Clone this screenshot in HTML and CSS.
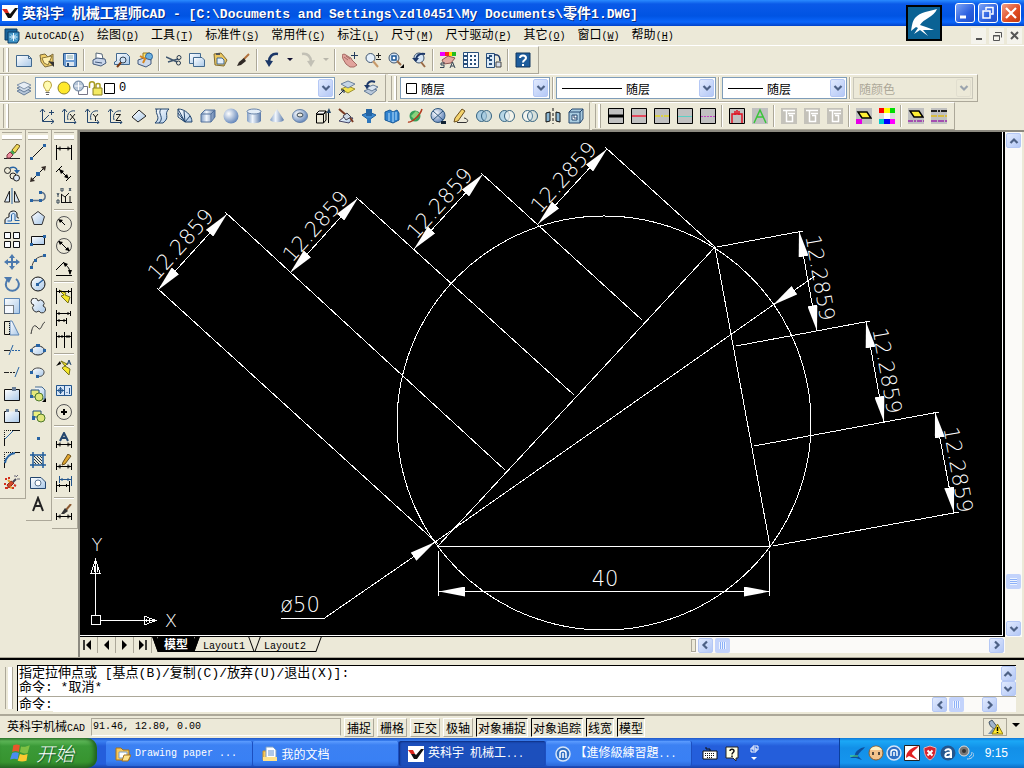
FILE: index.html
```html
<!DOCTYPE html>
<html lang="zh-CN">
<head>
  <meta charset="UTF-8">
  <meta name="viewport" content="width=device-width, initial-scale=1.0">
  <title>英科宇 机械工程师CAD</title>
  <link rel="stylesheet" href="styles.css">
</head>
<body>
  <!-- Shared gradients, arrow heads and repeated glyphs -->
  <svg class="defs" aria-hidden="true">
    <defs>
      <linearGradient id="sheet" x1="0" y1="0" x2="1" y2="1"><stop offset="0" stop-color="#fff"/><stop offset="1" stop-color="#a9c8e8"/></linearGradient>
      <linearGradient id="metal"><stop offset="0" stop-color="#7f9cc4"/><stop offset=".4" stop-color="#f2f7fd"/><stop offset="1" stop-color="#5878a8"/></linearGradient>
      <radialGradient id="ball" cx=".35" cy=".35" r=".7"><stop offset="0" stop-color="#fff"/><stop offset="1" stop-color="#5f83b8"/></radialGradient>
      <marker id="arrow" viewBox="0 0 26 10" refX="26" refY="5" markerWidth="26" markerHeight="10" markerUnits="userSpaceOnUse" orient="auto-start-reverse"><path d="M26 5L0 0V10Z" fill="#fff"/></marker>
      <symbol id="up" viewBox="0 0 10 10"><path d="M1.500 7L5 3.500L8.500 7" fill="none" stroke="#4d6185" stroke-width="2.200"/></symbol>
      <symbol id="down" viewBox="0 0 10 10"><path d="M1.500 3L5 6.500L8.500 3" fill="none" stroke="#4d6185" stroke-width="2.200"/></symbol>
      <symbol id="left" viewBox="0 0 10 10"><path d="M7 1.500L3.500 5L7 8.500" fill="none" stroke="#4d6185" stroke-width="2.200"/></symbol>
      <symbol id="right" viewBox="0 0 10 10"><path d="M3 1.500L6.500 5L3 8.500" fill="none" stroke="#4d6185" stroke-width="2.200"/></symbol>
      <symbol id="brand" viewBox="0 0 16 16"><path d="M0 0H16V16H0Z" fill="#fff"/><path d="M0 4H5L7 8H3Z" fill="#d8261c"/><path d="M3 8H7L8 9L13 3H16L9 13H6Z" fill="#111"/></symbol>
      <symbol id="dim" viewBox="0 0 16 16"><path d="M.5 9V16M15.500 9V16M1 12.500H15M4 10.500V14.500M3 11.500V13.500M12 10.500V14.500M13 11.500V13.500" fill="none" stroke="#000"/></symbol>
    </defs>
  </svg>

  <!-- Title bar -->
  <header class="title-bar">
    <svg class="icon"><use href="#brand"/></svg>
    <h1 class="title">英科宇<span class="en"> </span>机械工程师<span class="en">CAD - [C:\Documents and Settings\zdl0451\My Documents\</span>零件<span class="en">1.DWG]</span></h1>
    <div class="window-buttons">
      <button class="win-btn" aria-label="Minimize"><svg class="icon"><path d="M3 12H9" stroke="#fff" stroke-width="3"/></svg></button>
      <button class="win-btn" aria-label="Restore"><svg class="icon"><path d="M6 2.500H13V9H11M6 2V5M3 6H10V13H3Z" stroke="#fff" stroke-width="1.500"/></svg></button>
      <button class="win-btn close" aria-label="Close"><svg class="icon"><path d="M3 3L13 13M13 3L3 13" stroke="#fff" stroke-width="2.200"/></svg></button>
    </div>
    <svg class="swallow" viewBox="0 0 36 36"><path d="M1 1H35V35H1Z" fill="#0a6294" stroke="#000" stroke-width="2"/><path d="M31 4C24 6 14 7 9 13C6 17 6 21 5 26L10 22L12 23L8 29L14 25L22 31L17 25L28 25L20 22L14 20C17 14 28 12 31 4Z" fill="#fff"/></svg>
  </header>

  <!-- Menu -->
  <nav class="menu-bar">
    <svg class="icon"><path d="M1 1H13V12H1Z" fill="#17639b" stroke="#0c3c66"/><path d="M4 4H15V12L13 15H4Z" fill="#3f93c6" stroke="#0c3c66"/><path d="M9.500 5V13M5.500 9H13.500M7 6.500L12 11.500M12 6.500L7 11.500" stroke="#e9f7ff"/></svg>
    <button><span class="en">AutoCAD(<u>A</u>)</span></button>
    <button>绘图<span class="en">(<u>D</u>)</span></button>
    <button>工具<span class="en">(<u>T</u>)</span></button>
    <button>标准件<span class="en">(<u>S</u>)</span></button>
    <button>常用件<span class="en">(<u>C</u>)</span></button>
    <button>标注<span class="en">(<u>L</u>)</span></button>
    <button>尺寸<span class="en">(<u>M</u>)</span></button>
    <button>尺寸驱动<span class="en">(<u>P</u>)</span></button>
    <button>其它<span class="en">(<u>O</u>)</span></button>
    <button>窗口<span class="en">(<u>W</u>)</span></button>
    <button>帮助<span class="en">(<u>H</u>)</span></button>
    <div class="doc-buttons">
      <button aria-label="Minimize drawing"><svg class="icon"><path d="M5 11H11" stroke="#555" stroke-width="2"/></svg></button>
      <button aria-label="Restore drawing"><svg class="icon"><path d="M6 4.500H12.500V9.500M4.500 7.500H10.500V12.500H4.500ZM4 8H11" stroke="#555"/></svg></button>
      <button aria-label="Close drawing"><svg class="icon"><path d="M4 4L11 11M11 4L4 11" stroke="#555" stroke-width="2"/></svg></button>
    </div>
  </nav>

  <!-- Standard toolbar -->
  <div class="tool-row">
    <div class="toolbar">
      <span class="grip"></span>
      <button class="tool" aria-label="New"><svg class="icon"><path d="M.5 3.500H12.500L15.500 6.500V14.500H.5Z" fill="url(#sheet)" stroke="#42698f"/><path d="M12.500 3.500V6.500H15.500" stroke="#42698f"/></svg></button>
      <button class="tool" aria-label="Open"><svg class="icon"><path d="M1 3L6 2L9 5L14 2V13L6 15L2 10Z" fill="#f1cf69" stroke="#7a6a3c"/><path d="M3 6L13 4L9 13L5 11Z" fill="#fff0b0" stroke="#8d7738"/><path d="M9 9L15 15L15 10Z" fill="#333"/></svg></button>
      <button class="tool" aria-label="Save"><svg class="icon"><path d="M1.500 1.500H14.500V14.500H3L1.500 13Z" fill="#6d9dd4" stroke="#2a5688"/><path d="M4 2H12V8H4Z" fill="#f4f8fc"/><path d="M5 4H11M5 6H11" stroke="#8aa"/><path d="M4 10H12V14H4Z" fill="#dde6ef"/><path d="M6 11V14" stroke="#24466e" stroke-width="2"/></svg></button>
      <span class="sep"></span>
      <button class="tool" aria-label="Plot"><svg class="icon"><path d="M5 1L11 2L12 7L5 8Z" fill="#fff" stroke="#567"/><path d="M2 8L6 6L14 7L15 11L10 14L2 12Z" fill="#c9d6ea" stroke="#43597b"/><path d="M4 10L11 11" stroke="#43597b"/></svg></button>
      <button class="tool" aria-label="Plot Preview"><svg class="icon"><path d="M2.500 1.500H12.500L15.500 4.500V12.500H.5V10L2.500 9Z" fill="url(#sheet)" stroke="#42698f"/><circle cx="9" cy="8" r="3" fill="#cfe2f5" stroke="#345"/><path d="M7 10.500L3 15" stroke="#7a3a14" stroke-width="2"/></svg></button>
      <button class="tool" aria-label="Publish"><svg class="icon"><path d="M6 1H13L14 8H6Z" fill="#ffe066" stroke="#957a22"/><circle cx="12" cy="4.500" r="3.500" fill="#6db1df" stroke="#2a639d"/><path d="M1 8L7 6L14 8V12L9 15L1 12Z" fill="#ccd8ea" stroke="#43597b"/><path d="M3 4L8 7L6 11" stroke="#d7861e" stroke-width="2"/></svg></button>
      <span class="sep"></span>
      <button class="tool" aria-label="Cut"><svg class="icon"><path d="M0 5L11 10M2 10L12 7" stroke="#3f566f" stroke-width="1.500"/><circle cx="13" cy="5.500" r="2" stroke="#26384d"/><circle cx="12.500" cy="11" r="2" stroke="#26384d"/></svg></button>
      <button class="tool" aria-label="Copy"><svg class="icon"><path d="M.5 1.500H11.500V11.500H.5Z" fill="url(#sheet)" stroke="#42698f"/><path d="M4.500 5.500H13L15.500 8V14.500H4.500Z" fill="url(#sheet)" stroke="#42698f"/></svg></button>
      <button class="tool" aria-label="Paste"><svg class="icon"><path d="M2 2L9 1L15 8L12 14L3 13Z" fill="#ecc75f" stroke="#806a2f"/><path d="M5 6H10L12 8V12H5Z" fill="#e3eefa" stroke="#42698f"/><path d="M4 2H8" stroke="#555" stroke-width="2"/></svg></button>
      <button class="tool" aria-label="Match Properties"><svg class="icon"><path d="M14 2L8 8" stroke="#b3713c" stroke-width="2"/><path d="M9 6L11 9L6 13L2 14L4 10Z" fill="#302a26"/></svg></button>
      <span class="sep"></span>
      <button class="tool" aria-label="Undo"><svg class="icon"><path d="M14 2C8 1 5 5 5 10" stroke="#1b3768" stroke-width="2.500"/><path d="M1 8L9 9L5 15Z" fill="#1b3768"/></svg></button>
      <button class="drop" aria-label="Undo list"><svg class="icon"><path d="M5 6H11L8 9Z" fill="#113"/></svg></button>
      <button class="tool" aria-label="Redo"><svg class="icon"><path d="M2 2C8 1 11 5 11 10" stroke="#c2c0b5" stroke-width="2.500"/><path d="M15 8L7 9L11 15Z" fill="#c2c0b5"/></svg></button>
      <button class="drop" aria-label="Redo list"><svg class="icon"><path d="M5 6H11L8 9Z" fill="#b9b7ab"/></svg></button>
      <span class="sep"></span>
      <button class="tool" aria-label="Pan"><svg class="icon"><path d="M0 3L2 2L4 3L7 5L9 6L10 8L15 13L12 15H8L4 12L1 7Z" fill="#e1a39c" stroke="#a56a64"/><path d="M2 5L6 8M4 4L8 7" stroke="#a56a64"/><path d="M12.500 0V7M9 3.500H16" stroke="#233b5c"/></svg></button>
      <button class="tool" aria-label="Zoom Realtime"><svg class="icon"><circle cx="5.500" cy="6" r="4.500" fill="#e5f0fb" stroke="#3f556f"/><path d="M8 9L13 15" stroke="#c79a6a" stroke-width="2"/><path d="M13.500 1V6M11 3.500H16M11 7.500H16" stroke="#222"/></svg></button>
      <button class="tool" aria-label="Zoom Window"><svg class="icon"><circle cx="6" cy="6" r="5" fill="#d6e6f6" stroke="#3f556f"/><path d="M4 4H8V8H4Z" fill="#fff" stroke="#1c5795" stroke-width="1.500"/><path d="M9 9L13 13" stroke="#9a6b46" stroke-width="2"/><path d="M16 12V16H12Z" fill="#000"/></svg></button>
      <button class="tool" aria-label="Zoom Previous"><svg class="icon"><circle cx="8" cy="6" r="5" fill="#d6e6f6" stroke="#3f556f"/><path d="M14 2C9 1 6 3 5 7" stroke="#1b3768" stroke-width="2"/><path d="M1 6H8L5 10Z" fill="#1b3768"/><path d="M10 10L14 15" stroke="#9a6b46" stroke-width="2"/></svg></button>
      <span class="sep"></span>
      <button class="tool" aria-label="Properties"><svg class="icon"><path d="M0 0H5V4H0Z" fill="#e0f"/><path d="M5 0H9V4H5Z" fill="#f22"/><path d="M9 0H12V4H9Z" fill="#fd0"/><path d="M12 0H16V4H12Z" fill="#2b2"/><path d="M2 8L8 4L15 6L11 11L4 12Z" fill="#e3aaa2" stroke="#8a5550"/><path d="M5 11H1V13H4V15.500H0M10 16L12.500 10L15 16M11 14H14" stroke="#345"/></svg></button>
      <button class="tool" aria-label="DesignCenter"><svg class="icon"><path d="M.5 .5H15.500V15.500H.5Z" fill="#f7fbff" stroke="#294f7b"/><path d="M4.500 1V15" stroke="#294f7b"/><path d="M7 4H9M11 4H13M7 8H9M11 8H13M7 12H9M11 12H13M1 4H4M1 8H4M1 12H4" stroke="#294f7b" stroke-width="2"/></svg></button>
      <button class="tool" aria-label="Tool Palettes"><svg class="icon"><path d="M.5 1.500H8.500V15.500H.5Z" fill="#dcebf8" stroke="#294f7b"/><path d="M3 4H6M3 8H6M3 12H6M1 6H4" stroke="#294f7b" stroke-width="2"/><path d="M8 3C13 2 14 5 14 9" stroke="#1b3768" stroke-width="1.500"/><path d="M10 10H15V15H10Z" fill="#d5dfec" stroke="#444"/></svg></button>
      <span class="sep"></span>
      <button class="tool" aria-label="Help"><svg class="icon"><path d="M1 1H15V15H1Z" fill="#1d5c9c" stroke="#10365f"/><path d="M5 6C5 2.500 11 2.500 11 6C11 8 8 8 8 10.500M8 12V14" stroke="#fff" stroke-width="2"/></svg></button>
    </div>
  </div>

  <!-- Layers and object properties -->
  <div class="tool-row">
    <div class="toolbar">
      <span class="grip"></span>
      <button class="tool" aria-label="Layer Properties"><svg class="icon"><path d="M1 11L8 8L15 11L8 15Z" fill="#b7c7da" stroke="#667d99"/><path d="M1 8L8 5L15 8L8 12Z" fill="#cfdbe8" stroke="#667d99"/><path d="M1 5L8 2L15 5L8 9Z" fill="#e6edf5" stroke="#8194aa"/></svg></button>
      <label class="combo layer-combo">
        <svg class="icon"><path d="M6 11C6 9 3.500 8 3.500 5A4 4 0 0 1 11.500 5C11.500 8 9 9 9 11Z" fill="#fffbb0" stroke="#b9a23d"/><path d="M5.500 12.500H9.500M6 14.500H9" stroke="#666"/></svg>
        <svg class="icon"><circle cx="8" cy="8" r="6" fill="#ffe92c" stroke="#8d8228"/></svg>
        <svg class="icon"><path d="M9.500 6.500H15.500V14.500H6.500V11" stroke="#778" fill="#fff"/><circle cx="6.500" cy="6" r="5" fill="#b6c5d8" stroke="#667d99"/><path d="M6.500 2V10M2.500 6H10.500" stroke="#fff"/></svg>
        <svg class="icon"><path d="M1.500 8V4C1.500 1 6.500 1 6.500 4V8" stroke="#a99c25" stroke-width="1.500"/><path d="M5 8H14V15H5Z" fill="#f3ea63" stroke="#8b8020"/><path d="M8 8V5C8 3 12 3 12 5V8" stroke="#a99c25" stroke-width="1.500"/></svg>
        <svg class="swatch"><path d="M.5 .5H10.500V10.500H.5Z" fill="#fff" stroke="#000"/></svg>
        <select class="en" aria-label="Layer"><option>0</option></select>
        <span class="arrow-btn"><svg><use href="#down"/></svg></span>
      </label>
      <button class="tool" aria-label="Make Current"><svg class="icon"><path d="M2 9L9 6L16 9L9 13Z" fill="#f2e24e" stroke="#9c9030"/><path d="M2 4L9 1L16 4L9 8Z" fill="#c5d5e6" stroke="#6c819b"/><path d="M0 15L5 10M2 10H5V13" stroke="#124"/></svg></button>
      <button class="tool" aria-label="Layer Previous"><svg class="icon"><path d="M2 11L9 8L15 10L9 15Z" fill="#b9c8da" stroke="#667d99"/><path d="M4 8L11 5L16 7L10 11Z" fill="#dbe5ef" stroke="#667d99"/><path d="M13 2C8 0 5 3 5 6" stroke="#1b3768" stroke-width="2"/><path d="M2 5H8L5 9Z" fill="#1b3768"/></svg></button>
    </div>
    <div class="toolbar properties">
      <span class="grip"></span>
      <label class="combo color-combo">
        <svg class="swatch"><path d="M.5 .5H10.500V10.500H.5Z" fill="#fff" stroke="#000"/></svg>
        <select aria-label="Color"><option>随层</option></select>
        <span class="arrow-btn"><svg><use href="#down"/></svg></span>
      </label>
      <span class="sep"></span>
      <label class="combo line-combo">
        <span class="line-sample"></span>
        <select aria-label="Linetype"><option>随层</option></select>
        <span class="arrow-btn"><svg><use href="#down"/></svg></span>
      </label>
      <span class="sep"></span>
      <label class="combo weight-combo">
        <span class="line-sample short"></span>
        <select aria-label="Lineweight"><option>随层</option></select>
        <span class="arrow-btn"><svg><use href="#down"/></svg></span>
      </label>
      <span class="sep"></span>
      <label class="combo style-combo disabled">
        <select aria-label="Plot style" disabled><option>随颜色</option></select>
        <span class="arrow-btn"><svg><use href="#down"/></svg></span>
      </label>
    </div>
  </div>

  <!-- UCS, solids and linework -->
  <div class="tool-row">
    <div class="toolbar solids">
      <span class="grip"></span>
      <button class="tool" aria-label="UCS"><svg class="icon"><path d="M3.500 1V13.500H15M1 4L3.500 1L6 4M12 11L15 13.500L12 16M4 13L10 7M12.500 2V7M10 4.500H15" stroke="#24466e"/></svg></button>
      <button class="tool" aria-label="Rotate X"><svg class="icon"><path d="M2.500 1V14.500H14M0 4L2.500 1L5 4M12 12L14 14.500L12 16M6 12C4 5 9 2 13 3" stroke="#24466e"/><path d="M8 6L13 12M13 6L8 12" stroke="#111"/></svg></button>
      <button class="tool" aria-label="Rotate Y"><svg class="icon"><path d="M2.500 1V14.500H14M0 4L2.500 1L5 4M12 12L14 14.500L12 16M6 12C4 5 9 2 13 3" stroke="#24466e"/><path d="M8 6L10.500 9L13 6M10.500 9V13" stroke="#111"/></svg></button>
      <button class="tool" aria-label="Rotate Z"><svg class="icon"><path d="M2.500 1V14.500H14M0 4L2.500 1L5 4M12 12L14 14.500L12 16M6 12C4 5 9 2 13 3" stroke="#24466e"/><path d="M8 6.500H12.500L8 12.500H13" stroke="#111"/></svg></button>
      <button class="tool" aria-label="3D Face"><svg class="icon"><path d="M1 9L8 2L15 8L7 14Z" fill="url(#sheet)" stroke="#222"/></svg></button>
      <button class="tool" aria-label="Surface"><svg class="icon"><path d="M1 1H15C9 6 17 9 9 15H1C8 9 0 6 3 1" fill="url(#sheet)" stroke="#24466e"/><path d="M7 1C3 6 11 9 5 15" stroke="#24466e"/></svg></button>
      <button class="tool" aria-label="Revolved Surface"><svg class="icon"><path d="M1 1C8 1 15 7 15 14H8L1 9Z" fill="url(#sheet)" stroke="#24466e"/><path d="M1 1L8 14M7 3L8 14L13 8M1 5L8 14" stroke="#24466e"/></svg></button>
      <button class="tool" aria-label="Box"><svg class="icon"><path d="M1 6L5 2H15V9L11 14H1Z" fill="url(#metal)" stroke="#54739d"/><path d="M1 6H11V14M11 6L15 2" stroke="#54739d"/></svg></button>
      <button class="tool" aria-label="Sphere"><svg class="icon"><circle cx="8" cy="8" r="7.500" fill="url(#ball)"/></svg></button>
      <button class="tool" aria-label="Cylinder"><svg class="icon"><path d="M1 3V13C3 16 13 16 15 13V3Z" fill="url(#metal)"/><ellipse cx="8" cy="3.500" rx="7" ry="2.500" fill="#e4edf7" stroke="#6783aa"/></svg></button>
      <button class="tool" aria-label="Cone"><svg class="icon"><path d="M8 1L15 12C13 15 3 15 1 12Z" fill="url(#metal)"/></svg></button>
      <button class="tool" aria-label="Torus"><svg class="icon"><ellipse cx="8" cy="8" rx="7.500" ry="6.500" fill="url(#ball)" stroke="#6783aa"/><ellipse cx="8" cy="7" rx="3" ry="2" fill="#eceae0" stroke="#345"/></svg></button>
      <button class="tool" aria-label="Extrude"><svg class="icon"><path d="M1 6L4 3H11L9 6Z" fill="#fff" stroke="#000"/><path d="M1.500 6.500H8.500V15H1.500ZM8.500 6.500L11 3V12L8.500 15M13.500 15V2" stroke="#000"/><path d="M11.500 5L14 0L16 5Z" fill="#246"/></svg></button>
      <button class="tool" aria-label="Slice"><svg class="icon"><path d="M1 13L6 9L15 10L11 15Z" fill="url(#sheet)" stroke="#446"/><path d="M1 1L8 7M11 8L15 14" stroke="#7a3a24" stroke-width="2"/><path d="M5 8L9 5L13 9L8 12Z" fill="#cdd8e4" stroke="#445"/></svg></button>
      <button class="tool" aria-label="Section"><svg class="icon"><path d="M1 7L8 4L15 7L8 12Z" fill="#3e8ad0" stroke="#1d5f9f"/><path d="M5 1H11V8H5Z" fill="#2565a4"/><path d="M6 10H10V15H6Z" fill="#2f78bd"/></svg></button>
      <button class="tool" aria-label="Interfere"><svg class="icon"><path d="M1 4L6 2L9 4L13 2L15 5V12L9 15L1 12Z" fill="#3183cf" stroke="#195a98"/><path d="M5 5V13M9 4V14M12 4V12" stroke="#8cc2ee" stroke-width="1.500"/></svg></button>
      <button class="tool" aria-label="3D Orbit"><svg class="icon"><circle cx="8" cy="8" r="5.500" fill="#36a05a"/><path d="M4 8L9 3L13 6L8 12Z" fill="#8ad27c"/><path d="M1 14C4 15 13 8 15 1" stroke="#b33b1f" stroke-width="1.500"/></svg></button>
      <button class="tool" aria-label="Render"><svg class="icon"><circle cx="8" cy="7.500" r="7" fill="url(#ball)" stroke="#31587d"/><path d="M3 3L13 12M13 3L3 12" stroke="#31587d"/><path d="M11 13H16V16H11Z" fill="#123"/></svg></button>
      <button class="tool" aria-label="Sketch"><svg class="icon"><path d="M4 14.500H13C17 13 13 10 11 10" stroke="#333"/><path d="M9 1L12 3L5 13L1 14L2 10Z" fill="#f4d36c" stroke="#6c4f1c"/></svg></button>
      <button class="tool" aria-label="Union"><svg class="icon"><ellipse cx="5.500" cy="8" rx="5" ry="5.500" fill="#a9cce0" stroke="#356380"/><ellipse cx="10.500" cy="8" rx="5" ry="5.500" fill="#a9cce0" fill-opacity=".6" stroke="#356380"/></svg></button>
      <button class="tool" aria-label="Subtract"><svg class="icon"><ellipse cx="5.500" cy="8" rx="5" ry="5.500" fill="#b6d6e6" stroke="#356380"/><ellipse cx="10.500" cy="8" rx="5" ry="5.500" fill="#f7f7f2" fill-opacity=".7" stroke="#356380"/></svg></button>
      <button class="tool" aria-label="Intersect"><svg class="icon"><ellipse cx="5.500" cy="8" rx="5" ry="5.500" fill="#f5f5ef" stroke="#356380"/><ellipse cx="10.500" cy="8" rx="5" ry="5.500" fill="#a9cce0" fill-opacity=".3" stroke="#356380"/></svg></button>
      <button class="tool" aria-label="3D Mirror"><svg class="icon"><path d="M1 5L5 4V13L1 14ZM15 5L11 4V13L15 14Z" fill="#8bb7d3" stroke="#111"/><path d="M8 0V16" stroke="#111" stroke-dasharray="3 2"/></svg></button>
      <button class="tool" aria-label="Shell"><svg class="icon"><path d="M1 4L4 1H15V11L12 15H1Z" fill="#a9cce0" stroke="#24466e"/><path d="M1 4H12V15M12 4L15 1" stroke="#24466e"/><path d="M4 7H9V12H4Z" fill="#fff" stroke="#24466e"/><path d="M6 7V10H9" stroke="#24466e"/></svg></button>
    </div>
    <div class="toolbar linework">
      <span class="grip"></span>
      <button class="tool" aria-label="Thick line"><svg class="icon"><path d="M.5 .5H15.500V15.500H.5Z" fill="#c0c0c0" stroke="#000"/><path d="M1 8H15" stroke="#000" stroke-width="3"/></svg></button>
      <button class="tool" aria-label="Thin line"><svg class="icon"><path d="M.5 .5H15.500V15.500H.5Z" fill="#c0c0c0" stroke="#000"/><path d="M1 8H15" stroke="#e34a5e" stroke-width="2"/></svg></button>
      <button class="tool" aria-label="Center line"><svg class="icon"><path d="M.5 .5H15.500V15.500H.5Z" fill="#c0c0c0" stroke="#000"/><path d="M1 8H15" stroke="#d9d04a" stroke-width="2" stroke-dasharray="5 1 2 1"/></svg></button>
      <button class="tool" aria-label="Hidden line"><svg class="icon"><path d="M.5 .5H15.500V15.500H.5Z" fill="#c0c0c0" stroke="#000"/><path d="M1 8.500H15" stroke="#5cd0c5"/></svg></button>
      <button class="tool" aria-label="Dashed line"><svg class="icon"><path d="M.5 .5H15.500V15.500H.5Z" fill="#c0c0c0" stroke="#000"/><path d="M1 8.500H15" stroke="#c143c1" stroke-dasharray="2 1"/></svg></button>
      <span class="sep"></span>
      <button class="tool" aria-label="Thread"><svg class="icon"><path d="M.5 .5H15.500V15.500H.5Z" fill="#c0c0c0" stroke="#000"/><path d="M3 15V6H13V15M6 3V7M8 2V6M10 3V7" stroke="#e01020" stroke-width="1.500"/></svg></button>
      <button class="tool" aria-label="Text style"><svg class="icon"><path d="M0 0H16V16H0Z" fill="#c0c0c0"/><path d="M2 15L8 2L14 15M5 9H11" stroke="#3ac43a" stroke-width="1.500"/></svg></button>
      <span class="sep"></span>
      <button class="tool" aria-label="Align left"><svg class="icon"><path d="M0 0H16V16H0Z" fill="#c4c2ba"/><path d="M2 2.500H14M5.500 3V13.500H11.500V7.500H8M7 5.500H14" stroke="#fff" stroke-width="1.500"/></svg></button>
      <button class="tool" aria-label="Align center"><svg class="icon"><path d="M0 0H16V16H0Z" fill="#c4c2ba"/><path d="M2 2.500H14M5.500 3V13.500H11.500V7.500H8M7 5.500H14" stroke="#fff" stroke-width="1.500"/></svg></button>
      <button class="tool" aria-label="Align right"><svg class="icon"><path d="M0 0H16V16H0Z" fill="#c4c2ba"/><path d="M2 2.500H14M5.500 3V13.500H11.500V7.500H8M7 5.500H14" stroke="#fff" stroke-width="1.500"/></svg></button>
      <span class="sep"></span>
      <button class="tool" aria-label="Layer color"><svg class="icon"><path d="M0 0H16V16H0Z" fill="#c0c0c0"/><path d="M2 4H11L15 10H6Z" fill="#ffef35" stroke="#000" stroke-width="1.500"/><path d="M0 11H6V16H0Z" fill="#e600e6"/></svg></button>
      <button class="tool" aria-label="Colors"><svg class="icon"><path d="M0 0H5V5H0Z" fill="#f00"/><path d="M5 0H11V5H5Z" fill="#ff0"/><path d="M11 0H16V5H11Z" fill="#0d0"/><path d="M5 5H11V11H5Z" fill="#fff"/><path d="M0 5H5V11H0ZM11 5H16V11H11Z" fill="#ddd"/><path d="M0 11H5V16H0Z" fill="#0cc"/><path d="M5 11H11V16H5Z" fill="#00f"/><path d="M11 11H16V16H11Z" fill="#f0f"/></svg></button>
      <span class="sep"></span>
      <button class="tool" aria-label="Layer line"><svg class="icon"><path d="M0 0H16V16H0Z" fill="#c0c0c0"/><path d="M2 3H11L15 9H6Z" fill="#ffef35" stroke="#000" stroke-width="1.500"/><path d="M0 13H16" stroke="#a44fb0" stroke-width="2" stroke-dasharray="5 1 2 1"/></svg></button>
      <button class="tool" aria-label="Linetypes"><svg class="icon"><path d="M0 0H16V16H0Z" fill="#c0c0c0"/><path d="M0 3H16" stroke="#222" stroke-width="2" stroke-dasharray="6 1 2 1"/><path d="M0 8H16" stroke="#d8bd42" stroke-width="2" stroke-dasharray="6 1"/><path d="M0 13H16" stroke="#a44fb0" stroke-width="2" stroke-dasharray="6 1"/></svg></button>
    </div>
  </div>

  <main class="workspace">
    <!-- Modify -->
    <div class="side-bar">
      <button class="tool" aria-label="Erase"><svg class="icon"><path d="M0 14.500H16" stroke="#222"/><path d="M8 6L13 0L16 2L11 9Z" fill="#f1d95a" stroke="#67531c"/><path d="M8 6L11 9L9 11L6 8Z" fill="#46a350"/><path d="M6 8L9 11L6 14H3L3 11Z" fill="#ef8fa0" stroke="#7c3a44"/></svg></button>
      <button class="tool" aria-label="Copy object"><svg class="icon"><circle cx="3.500" cy="4.500" r="3" stroke="#222"/><circle cx="9" cy="10" r="3" stroke="#222"/><circle cx="12.500" cy="12" r="3" fill="#dce9f6" stroke="#222"/><path d="M6 2C10 0 13 2 13 5" stroke="#2864a4" stroke-width="1.500"/><path d="M10 4H16L13 8Z" fill="#2864a4"/></svg></button>
      <button class="tool" aria-label="Mirror"><svg class="icon"><path d="M.5 14L5.500 3V14ZM15.500 14L10.500 3V14Z" fill="#dce9f6" stroke="#222"/><path d="M8 0V16" stroke="#2864a4"/></svg></button>
      <button class="tool" aria-label="Offset"><svg class="icon"><path d="M1 14V10C2 7 4 8 5 7V4C6 0 13 0 13 4V7C13 8 15 8 15 8" fill="#dce9f6" stroke="#111"/><path d="M1 13.500H15.500M3.500 11H7.500V5C8 3 11 3 11 5V10.500H15.500" stroke="#2864a4"/></svg></button>
      <button class="tool" aria-label="Array"><svg class="icon"><path d="M.5 .5H6.500V6.500H.5ZM9.500 .5H15.500V6.500H9.500ZM.5 9.500H6.500V15.500H.5ZM9.500 9.500H15.500V15.500H9.500Z" fill="#f8fbff" stroke="#111"/></svg></button>
      <button class="tool" aria-label="Move"><svg class="icon"><path d="M8 2V14M2 8H14" stroke="#4b79ae" stroke-width="2"/><path d="M8 0L11 4H5ZM8 16L5 12H11ZM0 8L4 5V11ZM16 8L12 5V11Z" fill="#4b79ae"/></svg></button>
      <button class="tool" aria-label="Rotate"><svg class="icon"><path d="M4 3.500A6.500 6.500 0 1 0 12 3" stroke="#4b79ae" stroke-width="2"/><path d="M0 1L8 1L5 7Z" fill="#4b79ae"/></svg></button>
      <button class="tool" aria-label="Scale"><svg class="icon"><path d="M.5 .5H15.500V15.500H.5Z" fill="url(#sheet)" stroke="#5c86b5"/><path d="M.5 7.500H9.500V15.500H.5Z" fill="#f5f9ff" stroke="#111" stroke-dasharray="1 1"/></svg></button>
      <button class="tool" aria-label="Stretch"><svg class="icon"><path d="M6 1H8L15 15H6Z" fill="url(#sheet)" stroke="#5c86b5"/><path d="M6 1.500H.5V14.500H6" stroke="#111"/><path d="M5.500 1V15" stroke="#111" stroke-dasharray="1 1"/></svg></button>
      <button class="tool" aria-label="Trim"><svg class="icon"><path d="M0 8.500H6" stroke="#222"/><path d="M8 8.500H16" stroke="#2864a4" stroke-dasharray="2 1"/><path d="M5 13L9 3" stroke="#2864a4"/></svg></button>
      <button class="tool" aria-label="Extend"><svg class="icon"><path d="M0 8.500H5" stroke="#222"/><path d="M6 8.500H11" stroke="#222" stroke-dasharray="2 1"/><path d="M11 13L15 3" stroke="#2864a4"/></svg></button>
      <button class="tool" aria-label="Break at Point"><svg class="icon"><path d="M.5 3.500H15.500V14.500H.5Z" fill="url(#sheet)" stroke="#111"/><path d="M8 1H12V5H8Z" fill="#6a7f98"/></svg></button>
      <button class="tool" aria-label="Break"><svg class="icon"><path d="M4 3.500H.5V14.500H15.500V3.500H12" fill="url(#sheet)" stroke="#111"/><path d="M2 1H5V4H2ZM11 1H14V4H11Z" fill="#6a7f98"/></svg></button>
      <button class="tool" aria-label="Chamfer"><svg class="icon"><path d="M.5 16V9M9 .5H16" stroke="#111"/><path d="M.5 9V.5H9" stroke="#111" stroke-dasharray="1 1"/><path d="M1 9L9 1" stroke="#2864a4"/></svg></button>
      <button class="tool" aria-label="Fillet"><svg class="icon"><path d="M.5 16V10M11 .5H16" stroke="#111"/><path d="M.5 9V.5H9" stroke="#111" stroke-dasharray="1 1"/><path d="M1 11C2 5 5 2 11 1" stroke="#2864a4" stroke-width="2"/></svg></button>
      <button class="tool" aria-label="Explode"><svg class="icon"><path d="M1 5H3M5 3V5M0 10H2M10 11L12 12M1 14H4M9 13V15" stroke="#d22f1e" stroke-width="2"/><path d="M3 11L7 7L10 9L5 14Z" fill="#d3472b" stroke="#8d2618"/><path d="M9 8L12 5" stroke="#445" stroke-width="2"/><path d="M12 3L14 1M13 5H16M11 1V3" stroke="#667"/><path d="M4 6L6 8M6 13L8 14" stroke="#e99b2b" stroke-width="2"/></svg></button>
    </div>

    <!-- Draw -->
    <div class="side-bar">
      <button class="tool" aria-label="Line"><svg class="icon"><path d="M2 14L14 2" stroke="#111"/><path d="M0 13H3V16H0ZM13 0H16V3H13Z" fill="#2864a4"/></svg></button>
      <button class="tool" aria-label="Construction Line"><svg class="icon"><path d="M2 14L14 2" stroke="#111"/><path d="M0 16L1 11L5 15ZM16 0L15 5L11 1Z" fill="#332a25"/><path d="M6 6H10V10H6Z" fill="#2864a4"/></svg></button>
      <button class="tool" aria-label="Polyline"><svg class="icon"><path d="M1 12.500H11C17 12 16 4 11 4.500" stroke="#5a6f87" stroke-width="1.500"/><path d="M0 11H3V14H0ZM9 11H12V14H9ZM9 3H12V6H9Z" fill="#2864a4"/></svg></button>
      <button class="tool" aria-label="Polygon"><svg class="icon"><path d="M8 1.500L14.500 6.500L12 14.500H4L1.500 6.500Z" fill="url(#sheet)" stroke="#333"/></svg></button>
      <button class="tool" aria-label="Rectangle"><svg class="icon"><path d="M1.500 4.500H14.500V12.500H1.500Z" fill="url(#sheet)" stroke="#111"/><path d="M0 11H3V14H0ZM13 3H16V6H13Z" fill="#2864a4"/></svg></button>
      <button class="tool" aria-label="Arc"><svg class="icon"><path d="M2 14C2 7 7 2 15 2" stroke="#444"/><path d="M0 12H3V15H0ZM4 5H7V8H4ZM13 0H16V3H13Z" fill="#2864a4"/></svg></button>
      <button class="tool" aria-label="Circle"><svg class="icon"><circle cx="8" cy="8" r="7" fill="url(#sheet)" stroke="#111"/><path d="M8 8L13 4" stroke="#2864a4" stroke-width="1.500"/><path d="M6 7H9V10H6Z" fill="#2864a4"/></svg></button>
      <button class="tool" aria-label="Revision Cloud"><svg class="icon"><path d="M4 7A3.500 3.500 0 1 1 8 3A3.500 3.500 0 1 1 13 8A3.500 3.500 0 1 1 9 13A3.500 3.500 0 1 1 4 7Z" fill="url(#sheet)" stroke="#333"/></svg></button>
      <button class="tool" aria-label="Spline"><svg class="icon"><path d="M1 14C3 2 6 6 8 8C11 12 12 3 15 2" stroke="#333"/></svg></button>
      <button class="tool" aria-label="Ellipse"><svg class="icon"><ellipse cx="8" cy="8.500" rx="6.500" ry="4.500" fill="url(#sheet)" stroke="#222"/><path d="M0 7H3V10H0ZM13 7H16V10H13ZM6 2H10V5H6Z" fill="#2864a4"/></svg></button>
      <button class="tool" aria-label="Ellipse Arc"><svg class="icon"><path d="M2 8C3 2 15 3 14 9C13 12 11 13 7 12" fill="url(#sheet)" stroke="#444"/><path d="M0 7H3V10H0ZM6 11H9V14H6Z" fill="#2864a4"/></svg></button>
      <button class="tool" aria-label="Insert Block"><svg class="icon"><path d="M5 1H12L15 4V13H9" fill="url(#sheet)" stroke="#42698f"/><path d="M1 4H9V11H1Z" fill="#e6e87b" stroke="#1f4d7d"/><circle cx="9" cy="11" r="4" fill="#dfe67b" stroke="#4c782b"/><path d="M0 9H3V12H0Z" fill="#2864a4"/><path d="M16 12V16H12Z" fill="#000"/></svg></button>
      <button class="tool" aria-label="Make Block"><svg class="icon"><path d="M3 3H11V9H3Z" fill="#eff17c" stroke="#1f4d7d"/><circle cx="11" cy="10" r="4" fill="#dfe67b" stroke="#4c782b"/><path d="M2 8H5V12H2Z" fill="#2864a4"/></svg></button>
      <button class="tool" aria-label="Point"><svg class="icon"><path d="M7 7H10V10H7Z" fill="#2864a4"/></svg></button>
      <button class="tool" aria-label="Hatch"><svg class="icon"><path d="M3 0V16M13 0V16M0 3H16M0 13H16" stroke="#1f5c9c" stroke-width="1.500"/><path d="M4 4L12 12M4 7L9 12M4 10L6 12M7 4L12 9M10 4L12 6" stroke="#234"/></svg></button>
      <button class="tool" aria-label="Region"><svg class="icon"><path d="M.5 3.500H11L15.500 8V14.500H.5Z" fill="url(#sheet)" stroke="#24466e"/><circle cx="8" cy="9" r="3" fill="#fff" stroke="#5c7694"/></svg></button>
      <button class="tool" aria-label="Multiline Text"><svg class="icon"><path d="M3 15L8 2L13 15M5 10H11" stroke="#222" stroke-width="2"/></svg></button>
    </div>

    <!-- Dimension -->
    <div class="side-bar">
      <button class="tool" aria-label="Linear"><svg class="icon"><path d="M.5 1V16M15.500 1V16M1 4.500H15M4 2.500V6.500M3 3.500V5.500M12 2.500V6.500M13 3.500V5.500" stroke="#000"/></svg></button>
      <button class="tool" aria-label="Aligned"><svg class="icon"><path d="M0 6L6 0M10 15L15 10M3 3L13 13" stroke="#000"/><path d="M3 3L8 5L5 8ZM13 13L8 11L11 8Z" fill="#000"/></svg></button>
      <button class="tool" aria-label="Ordinate"><svg class="icon"><path d="M1 5L2 7L3 5M2 7V9M13 0L15 3M15 0L13 3M5 0H7V3H5ZM1 12H3V15H1Z" stroke="#345"/><path d="M5.500 6V15M5 14.500H16M5 6L9 9L13 5M9.500 9V15M14 8V15" stroke="#111"/></svg></button>
      <span class="sep"></span>
      <button class="tool" aria-label="Radius"><svg class="icon"><circle cx="8" cy="8" r="7.500" stroke="#555"/><path d="M9 9L4 4" stroke="#000"/><path d="M2 3L7 4L4 7Z" fill="#000"/></svg></button>
      <button class="tool" aria-label="Diameter"><svg class="icon"><circle cx="8" cy="8" r="7.500" stroke="#555"/><path d="M13 13L3 3" stroke="#000"/><path d="M2 3L7 4L4 7ZM14 13L9 12L12 9Z" fill="#000"/></svg></button>
      <button class="tool" aria-label="Angular"><svg class="icon"><path d="M0 15.500H16M0 10L8 2M8 4C12 6 14 9 14 14" stroke="#000"/><path d="M7 2L12 4L9 7ZM14 15L12 10L16 10Z" fill="#000"/></svg></button>
      <span class="sep"></span>
      <button class="tool" aria-label="Quick Dimension"><svg class="icon"><path d="M3 2L10 5L9 7L14 9L12 15L5 8L8 7Z" fill="#f5e728" stroke="#76701a"/><path d="M.5 0V16M15.500 0V16M1 3.500H15M3.500 2V5M12.500 2V5" stroke="#000"/></svg></button>
      <button class="tool" aria-label="Baseline"><svg class="icon"><path d="M.5 0V16M10.500 8V14M1 3.500H15M1 10.500H10M14.500 1V6M3 2V5M12 2V5M3 9V12M8 9V12" stroke="#000"/></svg></button>
      <button class="tool" aria-label="Continue"><svg class="icon"><path d="M.5 0V16M8.500 0V16M15.500 0V16M1 4.500H15M3 3V6M6 3V6M11 3V6M13 3V6" stroke="#000"/></svg></button>
      <span class="sep"></span>
      <button class="tool" aria-label="Quick Leader"><svg class="icon"><path d="M5 1L11 4L9 6L14 9L13 15L6 8L9 6Z" fill="#f5e728" stroke="#76701a"/><path d="M0 6L4 1L5 4Z" fill="#000"/><path d="M11 5L13 0L15 5M12 3H14" stroke="#24466e"/></svg></button>
      <button class="tool" aria-label="Tolerance"><svg class="icon"><path d="M.5 3.500H15.500V13.500H.5ZM8.500 3V13" fill="#d7e6f7" stroke="#24568d"/><circle cx="4.500" cy="8.500" r="2" stroke="#24568d"/><path d="M1 8.500H8M4.500 5V12M11 11V10M13.500 6V12" stroke="#24568d"/></svg></button>
      <button class="tool" aria-label="Center Mark"><svg class="icon"><circle cx="8" cy="8" r="7.500" stroke="#555"/><path d="M8 5V11M5 8H11" stroke="#000" stroke-width="2"/></svg></button>
      <span class="sep"></span>
      <button class="tool" aria-label="Dimension Text Edit"><svg class="icon"><use href="#dim"/><path d="M4 9L8 1L12 9M6 6H10" stroke="#24466e" stroke-width="2"/></svg></button>
      <button class="tool" aria-label="Dimension Edit"><svg class="icon"><use href="#dim"/><path d="M12 0L15 2L9 10L6 11L7 8Z" fill="#e0a62e" stroke="#6c4f1c"/></svg></button>
      <button class="tool" aria-label="Dimension Update"><svg class="icon"><path d="M3.500 0V7M15.500 0V10M3 3.500H15M6 2V5M12 2V5" stroke="#24568d"/><path d="M.5 5V16M13.500 5V16M1 9.500H13M3.500 8V11M10.500 8V11" stroke="#000"/></svg></button>
      <span class="sep"></span>
      <button class="tool" aria-label="Dimension Style"><svg class="icon"><use href="#dim"/><path d="M15 0L10 6" stroke="#8d5a32" stroke-width="2"/><path d="M9 4L12 7L8 10L5 10Z" fill="#333"/></svg></button>
    </div>

    <section class="drawing-pane">
      <div class="canvas-row">
        <div class="canvas">
          <svg class="drawing" viewBox="80 132 922 503">
            <circle cx="604" cy="423" r="207"/>
            <path d="M715 247L438 546H770Z"/>
            <!-- extension lines -->
            <path d="M605 147L715 247M481 173L642 320M356 197L574 395M225 212L505 470M157 288L438 544"/>
            <path d="M717 247L803 231M736 346L870 321M754 446L939 412M773 546L959 512M438.500 551V596M769.500 551V596"/>
            <!-- dimension lines -->
            <path class="dim" d="M158 290L227 214"/>
            <path class="dim" d="M290 273L358 198"/>
            <path class="dim" d="M414 249L483 174"/>
            <path class="dim" d="M538 224L607 149"/>
            <path class="dim" d="M799 231L817 331"/>
            <path class="dim" d="M866 322L884 422"/>
            <path class="dim" d="M935 412L954 513"/>
            <path class="dim" d="M439 591.500H770"/>
            <path d="M435 542L773 305"/>
            <path class="leader" d="M281 618.500H324L435 542"/>
            <path class="leader" d="M815 276L773 305"/>
            <text transform="translate(186 249) rotate(-48)">12.2859</text>
            <text transform="translate(321 231) rotate(-48)">12.2859</text>
            <text transform="translate(445 208) rotate(-48)">12.2859</text>
            <text transform="translate(569 182) rotate(-48)">12.2859</text>
            <text transform="translate(813 279) rotate(80)">12.2859</text>
            <text transform="translate(880 372) rotate(80)">12.2859</text>
            <text transform="translate(951 471) rotate(80)">12.2859</text>
            <text x="605" y="586">40</text>
            <text x="300" y="612">ø50</text>
            <!-- UCS icon -->
            <path d="M91.500 615.500H100.500V624.500H91.500ZM95.500 615V560M101 620.500H156M95.500 560L91 573H100ZM156 620.500L144 616V625Z"/>
            <path d="M95.500 562V572M94 566V572M97.500 566V572M146 619V622M149 619V622"/>
            <text class="axis" x="97" y="551">Y</text>
            <text class="axis" x="171" y="627">X</text>
          </svg>
        </div>
        <div class="scroll-v">
          <button class="arrow-btn" aria-label="Scroll up"><svg><use href="#up"/></svg></button>
          <span class="track"></span>
          <span class="thumb"></span>
          <span class="track end"></span>
          <button class="arrow-btn" aria-label="Scroll down"><svg><use href="#down"/></svg></button>
        </div>
      </div>
      <div class="tab-row">
        <button class="tab-nav" aria-label="First tab"><svg class="icon"><path d="M4 3V13" stroke="#000" stroke-width="1.500"/><path d="M11 3V13L6 8Z" fill="#000"/></svg></button>
        <button class="tab-nav" aria-label="Previous tab"><svg class="icon"><path d="M11 3V13L6 8Z" fill="#000"/></svg></button>
        <button class="tab-nav" aria-label="Next tab"><svg class="icon"><path d="M6 3V13L11 8Z" fill="#000"/></svg></button>
        <button class="tab-nav" aria-label="Last tab"><svg class="icon"><path d="M12 3V13" stroke="#000" stroke-width="1.500"/><path d="M5 3V13L10 8Z" fill="#000"/></svg></button>
        <button class="tab current">模型</button>
        <button class="tab"><span class="en">Layout1</span></button>
        <button class="tab"><span class="en">Layout2</span></button>
        <div class="scroll-h">
          <span class="splitter"></span>
          <button class="arrow-btn" aria-label="Scroll left"><svg><use href="#left"/></svg></button>
          <span class="thumb"></span>
          <span class="track"></span>
          <button class="arrow-btn" aria-label="Scroll right"><svg><use href="#right"/></svg></button>
        </div>
      </div>
    </section>
  </main>

  <!-- Command line -->
  <section class="command">
    <span class="grip"></span>
    <div class="command-box">
      <div class="history">
        <div class="log">
          <p>指定拉伸点或 [基点(B)/复制(C)/放弃(U)/退出(X)]:</p>
          <p>命令: *取消*</p>
        </div>
        <div class="history-scroll">
          <button class="arrow-btn" aria-label="Command up"><svg><use href="#up"/></svg></button>
          <button class="arrow-btn" aria-label="Command down"><svg><use href="#down"/></svg></button>
        </div>
      </div>
      <div class="prompt">
        <label for="cmd">命令:</label>
        <input id="cmd" type="text">
        <div class="prompt-scroll">
          <button class="arrow-btn" aria-label="Command left"><svg><use href="#left"/></svg></button>
          <span class="thumb"></span>
          <span class="track"></span>
          <button class="arrow-btn" aria-label="Command right"><svg><use href="#right"/></svg></button>
        </div>
      </div>
    </div>
  </section>

  <!-- Status bar -->
  <div class="status-bar">
    <span class="app-name">英科宇机械<span class="en">CAD</span></span>
    <span class="coords en">91.46, 12.80, 0.00</span>
    <button class="mode">捕捉</button>
    <button class="mode">栅格</button>
    <button class="mode">正交</button>
    <button class="mode">极轴</button>
    <button class="mode on">对象捕捉</button>
    <button class="mode on">对象追踪</button>
    <button class="mode on">线宽</button>
    <button class="mode on">模型</button>
    <div class="comm">
      <svg class="icon"><path d="M2 3C3 9 8 11 11 9L5 1Z" fill="#9fb4cc" stroke="#456"/><path d="M1 15L6 9L9 15Z" fill="#8095ad"/><path d="M10.500 5L16 15H5Z" fill="#ffe82e" stroke="#8b7b10"/><path d="M10.500 8V12M10.500 13V14" stroke="#000" stroke-width="1.500"/></svg>
    </div>
    <button class="tray-menu" aria-label="Status menu"><svg><path d="M0 0H8L4 4Z" fill="#000"/></svg></button>
  </div>

  <!-- Taskbar -->
  <footer class="taskbar">
    <button class="start">
      <svg class="flag" viewBox="0 0 20 20"><path d="M3 3C5 2 7 2 9 3L8 9C6 8 4 8 2 9Z" fill="#e8562b"/><path d="M10 4C13 5 15 4 18 3L16 10C14 11 11 10 9 9Z" fill="#7fc043"/><path d="M2 10C4 9 6 9 8 10L7 16C5 15 3 15 0 16Z" fill="#4a8df0"/><path d="M9 11C11 12 14 12 16 11L15 17C12 18 10 18 7 17Z" fill="#fbc930"/></svg>
      开始
    </button>
    <div class="tasks">
      <button class="task"><svg class="icon"><path d="M1 2H6L8 4H14V14H1Z" fill="#f7c95b" stroke="#a9731b"/><path d="M4 6H12V12H4Z" fill="#fff" stroke="#7b9dc5"/><path d="M9 9H16L13 15H7Z" fill="#ffe28a" stroke="#a9731b"/></svg><span class="en">Drawing paper ...</span></button>
      <button class="task"><svg class="icon"><path d="M1 5H10V14H1Z" fill="#f7c95b" stroke="#c9922b"/><path d="M4 1H11L14 4V12H4Z" fill="#fff" stroke="#7b9dc5"/><path d="M6 5H12M6 7H12M6 9H12" stroke="#5d8fcf"/><path d="M1 11H15V15H1Z" fill="#ffe28a"/></svg><span>我的文档</span></button>
      <button class="task active"><svg class="icon"><use href="#brand"/></svg><span>英科宇<span class="en"> </span>机械工<span class="en">...</span></span></button>
      <button class="task"><svg class="icon"><circle cx="8" cy="8" r="7" fill="#2f6fc4" stroke="#d5e5f8" stroke-width="1.500"/><path d="M5 12V7C5 4 11 4 11 7V12M8 7V12" stroke="#fff" stroke-width="1.500"/></svg><span>【進修級練習題<span class="en">...</span></span></button>
    </div>
    <div class="lang-bar">
      <svg class="icon"><path d="M1 6H15V14H1Z" fill="#fff" stroke="#111"/><path d="M3 8.500H13M3 10.500H13M5 12.500H11" stroke="#111" stroke-dasharray="1 1"/><path d="M8 6V4H4V2" stroke="#111"/></svg>
      <svg class="icon"><path d="M2 2H14V13H12V16L9 13H2Z" fill="#ffffe6" stroke="#222"/><path d="M6 6C6 3.500 10 3.500 10 6C10 7.500 8 7.500 8 9.500M8 10.500V12" stroke="#111" stroke-width="1.500"/></svg>
      <svg class="icon"><path d="M7 1H12V5H7ZM5 3H10V7H5Z" fill="#245edb" stroke="#fff"/><path d="M5 12H11L8 15Z" fill="#fff"/></svg>
    </div>
    <div class="tray">
      <svg class="icon"><path d="M15 2C10 3 5 6 5 10L0 13H6L12 15L8 11C8 8 12 6 15 2Z" fill="#0d4f9c"/><path d="M0 11H8" stroke="#59e06e"/></svg>
      <svg class="icon"><circle cx="8" cy="8" r="7" fill="#f2c38b" stroke="#8d5d2c"/><path d="M2 5C5 0 12 1 14 5Z" fill="#fff2c4"/><path d="M5 7V10M11 7V10" stroke="#222" stroke-width="1.500"/></svg>
      <svg class="icon"><circle cx="8" cy="8" r="7" fill="#2f6fc4" stroke="#d5e5f8" stroke-width="1.500"/><path d="M5 11V7C5 4 11 4 11 7V11M8 7V11" stroke="#fff" stroke-width="1.500"/></svg>
      <svg class="icon"><path d="M.5 .5H15.500V15.500H.5Z" fill="#fff" stroke="#222"/><path d="M15 1C8 2 2 6 2 13L5 11L14 15L8 9C8 6 12 5 15 1Z" fill="#e02020"/></svg>
      <svg class="icon"><path d="M8 1L14 3C14 9 12 13 8 15C4 13 2 9 2 3Z" fill="#d6232e" stroke="#e9b1b1"/><path d="M5.500 5.500L10.500 10.500M10.500 5.500L5.500 10.500" stroke="#fff" stroke-width="2"/></svg>
      <svg class="icon"><circle cx="8" cy="8" r="7.500" fill="#23568e"/><path d="M5 6C7 3 11 4 11 7V13M11 8C4 7 4 13 8 12C10 12 11 11 11 9" stroke="#fff" stroke-width="2"/></svg>
      <svg class="icon"><circle cx="6" cy="6" r="5" fill="#777" stroke="#ddd"/><circle cx="6" cy="6" r="2" fill="#333"/><path d="M11 12C13 11 14 9 14 7M9 14C13 14 16 12 16 8" stroke="#c9d8ea"/></svg>
      <time class="clock">9:15</time>
    </div>
  </footer>
</body>
</html>
```
FILE: styles.css
```css
* { box-sizing: border-box; }
body {
  margin: 0;
  height: 100vh;
  display: flex;
  flex-direction: column;
  overflow: hidden;
  background: #ece9d8;
  color: #000;
  font: 12px/16px "Noto Sans CJK SC", sans-serif;
}
button {
  margin: 0;
  padding: 0;
  border: none;
  background: none;
  color: inherit;
  font: inherit;
  flex-shrink: 0;
}
p { margin: 0; }
.defs { position: absolute; width: 0; height: 0; }
.icon { width: 16px; height: 16px; fill: none; flex-shrink: 0; display: block; }
.en { font-family: "Liberation Mono", monospace; font-size: 10px; white-space: pre; }

/* Title bar */
.title-bar {
  position: relative;
  display: flex;
  align-items: center;
  height: 26px;
  padding: 0 3px 0 2px;
  flex-shrink: 0;
  background: linear-gradient(#2a8bff, #0a5ae8 4px, #0054e3 16px, #0a66fb 22px, #0142c8);
  color: #fff;
}
.title {
  flex: 1;
  margin: 0 0 0 4px;
  font-size: 14px;
  line-height: 20px;
  font-weight: bold;
  white-space: nowrap;
  text-shadow: 1px 1px #0a2a80;
}
.title .en { font-size: 13px; }
.window-buttons { display: flex; gap: 3px; }
.win-btn {
  width: 20px;
  height: 20px;
  padding: 1px;
  border: 1px solid #fff;
  border-radius: 3px;
  background: linear-gradient(135deg, #7fa5f5, #2a5fe0 60%, #2350c8);
}
.win-btn.close { background: linear-gradient(135deg, #f0a088, #e04a20 60%, #c03a10); }
.swallow {
  position: absolute;
  top: 5px;
  right: 82px;
  width: 36px;
  height: 36px;
  fill: none;
  z-index: 2;
}

/* Menu */
.menu-bar {
  display: flex;
  align-items: center;
  gap: 12px;
  height: 20px;
  padding: 0 2px 0 4px;
  flex-shrink: 0;
  border-bottom: 1px solid #fff;
}
.menu-bar > .icon { margin-right: -7px; }
.doc-buttons { display: flex; gap: 3px; margin-left: auto; }
.doc-buttons button { background: #f4f3ec; width: 15px; height: 16px; }

/* Toolbars */
.tool-row { display: flex; gap: 2px; height: 28px; flex-shrink: 0; }
.toolbar {
  display: flex;
  align-items: center;
  padding-right: 4px;
  border-top: 1px solid #fff;
  border-right: 1px solid #aca899;
  border-bottom: 1px solid #aca899;
}
.grip {
  width: 6px;
  height: 24px;
  margin: 0 3px;
  flex-shrink: 0;
  border: solid #aca899;
  border-width: 0 1px;
  background: linear-gradient(90deg, #ece9d8 2px, #fff 2px);
}
.tool {
  display: flex;
  align-items: center;
  justify-content: center;
  width: 23px;
  height: 22px;
}
.drop { width: 13px; height: 22px; display: flex; align-items: center; justify-content: center; }
.tool:hover, .drop:hover { background: #fff; }
.sep {
  width: 6px;
  height: 22px;
  flex-shrink: 0;
  background: linear-gradient(90deg, transparent 2px, #aca899 2px, #aca899 3px, #fff 3px, #fff 4px, transparent 4px);
}
.toolbar.solids { padding-right: 2px; }
.solids .grip { margin-right: 26px; }
.combo {
  display: flex;
  align-items: center;
  height: 22px;
  padding: 1px;
  border: 1px solid #7f9db9;
  background: #fff;
}
.combo select {
  flex: 1;
  min-width: 0;
  padding: 0 4px;
  border: none;
  background: none;
  color: #000;
  font-family: inherit;
  font-size: 12px;
  appearance: none;
}
.combo select.en { font-family: "Liberation Mono", monospace; }
.swatch { width: 11px; height: 11px; flex-shrink: 0; margin-left: 4px; }
.layer-combo .swatch { margin-left: 0; }
.layer-combo { width: 300px; padding-left: 4px; }
.color-combo { width: 150px; }
.line-combo { width: 160px; }
.weight-combo { width: 125px; }
.style-combo { width: 120px; }
.combo.disabled { border-color: #c9c7ba; background: #ece9d8; }
.combo.disabled select { color: #aca899; opacity: 1; }
.combo.disabled .arrow-btn { background: #ece9d8; border-color: #d8d5c8; opacity: 0.5; }
.line-sample { width: 60px; height: 1px; margin-left: 4px; background: #000; }
.line-sample.short { width: 35px; }
.arrow-btn {
  display: flex;
  align-items: center;
  justify-content: center;
  width: 15px;
  height: 15px;
  flex-shrink: 0;
  border: 1px solid #b5c8f5;
  border-radius: 2px;
  background: linear-gradient(135deg, #e1eafe, #b4c8f6);
}
.arrow-btn svg { width: 10px; height: 10px; }
.combo .arrow-btn { height: 18px; }

/* Workspace */
.workspace { display: flex; flex: 1; min-height: 0; }
.side-bar {
  display: flex;
  flex-direction: column;
  align-self: flex-start;
  align-items: center;
  width: 26px;
  padding: 0 1px 5px 0;
  flex-shrink: 0;
  border-right: 1px solid #aca899;
  border-bottom: 1px solid #aca899;
}
.side-bar::before {
  content: "";
  width: 20px;
  height: 6px;
  margin: 2px 0 1px;
  border: solid #aca899;
  border-width: 1px 0;
  background: linear-gradient(#ece9d8 2px, #fff 2px);
}
.side-bar .sep {
  width: 20px;
  height: 6px;
  background: linear-gradient(transparent 2px, #aca899 2px, #aca899 3px, #fff 3px, #fff 4px, transparent 4px);
}
.drawing-pane {
  display: flex;
  flex-direction: column;
  flex: 1;
  min-width: 0;
  padding: 0 2px 4px 0;
  border-top: 2px solid #8c8a80;
  border-left: 2px solid #8c8a80;
}
.canvas-row { display: flex; flex: 1; min-height: 0; }
.canvas {
  flex: 1;
  min-width: 0;
  padding: 0 2px 1px 0;
  background: #000;
}
.drawing {
  display: block;
  width: 100%;
  height: 100%;
  border: solid #fff;
  border-width: 0 1px 1px 0;
  fill: none;
  stroke: #fff;
  shape-rendering: crispEdges;
}
.drawing text {
  fill: #fff;
  stroke: none;
  font-family: "DejaVu Sans Light", "DejaVu Sans", sans-serif;
  font-weight: 200;
  font-size: 21px;
  text-anchor: middle;
}
.drawing .axis { font-size: 18px; }
.dim { marker-start: url(#arrow); marker-end: url(#arrow); }
.leader { marker-end: url(#arrow); }

.scroll-v {
  display: flex;
  flex-direction: column;
  align-items: center;
  width: 17px;
  padding: 1px 0;
  background: #fbfaf8;
}
.track { flex: 1; }
.scroll-v .track.end { flex: 0 1 32px; }
.thumb {
  width: 15px;
  height: 15px;
  flex-shrink: 0;
  border: 4px solid #c3d3fb;
  border-radius: 2px;
  background: repeating-linear-gradient(90deg, #eef4fe 0 1px, #8cb0f8 1px 2px);
}
.scroll-v .thumb { background: repeating-linear-gradient(#eef4fe 0 1px, #8cb0f8 1px 2px); }

.tab-row { display: flex; height: 16px; flex-shrink: 0; padding-right: 17px; }
.tab-nav {
  width: 18px;
  height: 16px;
  border-right: 1px solid #aca899;
}
.tab {
  position: relative;
  height: 15px;
  padding: 0 10px;
  margin-right: -1px;
  border-bottom: 1px solid #000;
  line-height: 14px;
}
.tab-nav + .tab { margin-left: 6px; }
.tab::before, .tab::after {
  content: "";
  position: absolute;
  top: 0;
  bottom: -1px;
  width: 4px;
}
.tab::before { left: -3px; border-left: 1px solid #000; transform: skewX(20deg); }
.tab::after { right: -3px; border-right: 1px solid #000; transform: skewX(-20deg); }
.tab.current { padding: 0 6px; background: #000; color: #fff; font-weight: bold; }
.tab.current::before, .tab.current::after { background: #000; }
.scroll-h {
  display: flex;
  align-items: center;
  gap: 2px;
  width: 34%;
  margin-left: auto;
  padding-right: 1px;
  background: #fbfaf8;
}
.splitter { width: 5px; height: 13px; border: 1px solid #aca899; background: #ece9d8; }

/* Command line */
.command {
  display: flex;
  height: 59px;
  padding: 5px 8px 3px 2px;
  flex-shrink: 0;
  border-top: 1px solid #aca899;
  border-bottom: 2px solid #aca899;
  box-shadow: inset 0 2px #000;
}
.command .grip { height: 42px; width: 8px; margin: 4px 4px 0 3px; }
.command-box {
  display: flex;
  flex-direction: column;
  flex: 1;
  min-width: 0;
  margin-top: 2px;
  border-top: 1px solid #000;
  border-left: 1px solid #000;
  background: #fff;
  font: 13px/14px "Liberation Mono", "Noto Sans CJK SC", monospace;
}
.history { display: flex; justify-content: space-between; height: 31px; border-bottom: 1px solid #aca899; }
.log { padding: 1px; }
.history-scroll { display: flex; flex-direction: column; align-items: center; width: 16px; }
.prompt { display: flex; align-items: center; flex: 1; padding-left: 1px; }
.prompt input { flex: 1; min-width: 0; height: 14px; padding: 0; border: none; outline: none; font: inherit; }
.prompt-scroll { display: flex; gap: 2px; width: 84px; padding-right: 19px; background: #fbfaf8; }
.prompt-scroll .track { min-width: 0; }

/* Status bar */
.status-bar {
  display: flex;
  align-items: center;
  gap: 3px;
  height: 22px;
  padding: 0 2px 0 7px;
  flex-shrink: 0;
  line-height: 18px;
}
.app-name { width: 81px; white-space: nowrap; }
.coords {
  width: 250px;
  height: 18px;
  padding-left: 1px;
  border: 1px solid #aca899;
  border-bottom-color: #fff;
  line-height: 16px;
}
.mode {
  height: 19px;
  padding: 0 2px;
  border: 1px solid;
  border-color: #fff #aca899 #aca899 #fff;
  line-height: 17px;
}
.mode.on { padding: 0 1px; border-color: #000 #fff #fff #000; }
.comm { margin-left: auto; padding: 0 3px; border: 1px solid #aca899; }
.tray-menu { width: 12px; height: 8px; display: flex; justify-content: center; }
.tray-menu svg { width: 8px; height: 4px; }

/* Taskbar */
.taskbar {
  display: flex;
  height: 30px;
  flex-shrink: 0;
  background: linear-gradient(#1f58c8, #3a80f2 3px, #245edb 8px, #245edb 26px, #1941a5);
  color: #fff;
}
.start {
  display: flex;
  align-items: center;
  gap: 4px;
  width: 97px;
  padding-left: 10px;
  border-radius: 0 10px 10px 0;
  background: linear-gradient(#3c8a3a, #5eb858 3px, #3b9a38 8px, #37942f 24px, #2a6e27);
  box-shadow: inset -3px 0 4px #1f5f1e;
  font-size: 19px;
  line-height: 28px;
  font-style: italic;
  font-weight: 300;
  text-shadow: 1px 1px 1px #153;
}
.flag { width: 22px; height: 22px; }
.tasks { display: flex; flex: 0 1 586px; min-width: 0; margin-left: 9px; }
.task {
  display: flex;
  align-items: center;
  gap: 4px;
  flex: 1 1 0;
  height: 25px;
  margin-top: 3px;
  padding-left: 9px;
  border-right: 1px solid #1c4fc0;
  border-radius: 2px;
  background: linear-gradient(#5d9dff, #3c81f3 4px, #3980f4 20px, #2b68d8);
  white-space: nowrap;
}
.task.active { background: #1c4fbc; box-shadow: inset 1px 1px 2px #0d2e80; }
.lang-bar { display: flex; align-items: center; gap: 6px; margin-left: 10px; }
.tray {
  display: flex;
  align-items: center;
  gap: 2px;
  width: 185px;
  margin-left: auto;
  padding: 0 16px 0 10px;
  flex-shrink: 0;
  border-left: 1px solid #0a3f9c;
  background: linear-gradient(#0f78d8, #1ba8f6 3px, #1290e8 10px, #1595ee 25px, #0c6cc4);
}
.clock { margin-left: auto; font-family: "Liberation Sans", sans-serif; }
```
